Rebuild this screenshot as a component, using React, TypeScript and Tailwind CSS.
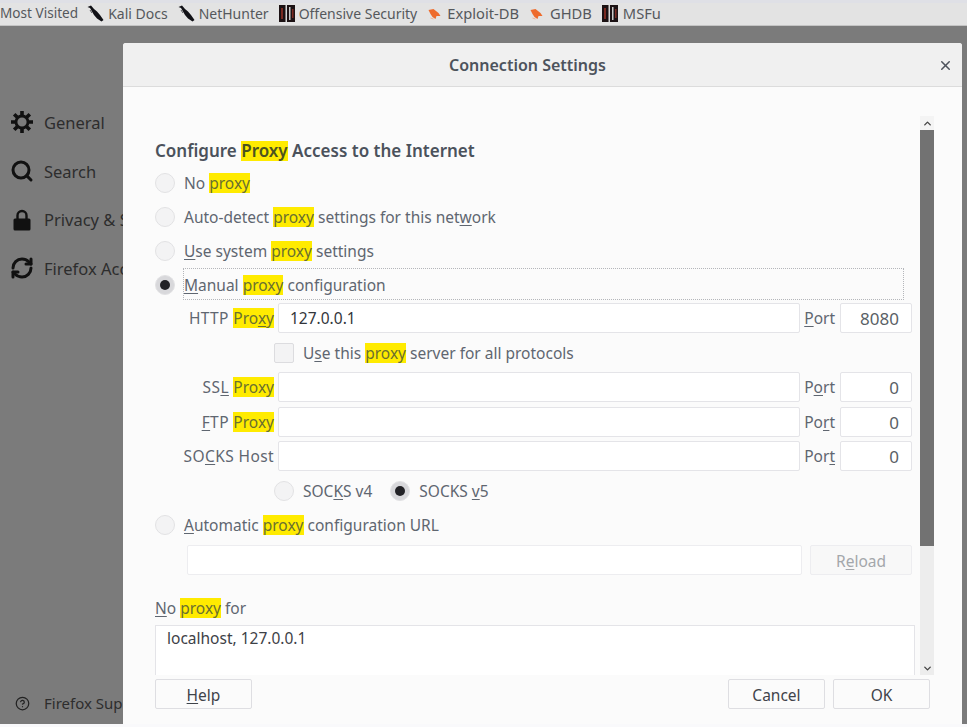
import React from 'react';
import { X, ChevronUp, ChevronDown, Search, RefreshCw, CircleHelp } from 'lucide-react';

const Hl: React.FC<{ children: React.ReactNode; strong?: boolean }> = ({ children, strong }) => (
  <span className={`inline-block h-[20px] leading-[20px] tracking-normal bg-[#ffeb00] ${strong ? 'text-[#4c5320]' : 'text-[#6a7030]'}`}>{children}</span>
);

const U: React.FC<{ children: React.ReactNode }> = ({ children }) => (
  <span className="underline underline-offset-2 decoration-1">{children}</span>
);

const Radio: React.FC<{ on?: boolean }> = ({ on }) => (
  <span className={`flex items-center justify-center w-[20px] h-[20px] rounded-full border border-[#e2e2e4] shrink-0 ${on ? 'bg-[#d8d8db]' : 'bg-[#f3f3f4]'}`}>
    {on && <span className="w-[10px] h-[10px] rounded-full bg-[#222226]" />}
  </span>
);

const KaliIcon = () => (
  <svg width="17" height="17" viewBox="0 0 17 17" className="shrink-0">
    <path d="M0.5 2 L4 0.5 L7 4 L10 6.5 L13 10 L16.5 15 L14.5 16.5 L10 13.5 L7 10 L5 6.5 L3 3 Z" fill="#111116" />
    <path d="M3 5 L5 8" stroke="#55555a" strokeWidth="1" />
  </svg>
);

const OffsecIcon = () => (
  <svg width="16" height="17" viewBox="0 0 16 17" className="shrink-0">
    <rect width="16" height="17" fill="#1c1214" />
    <rect x="2" y="3" width="2" height="11" fill="#7a2a22" />
    <rect x="6.5" y="0" width="1.5" height="17" fill="#d8d8d8" />
    <rect x="10" y="2" width="1.5" height="13" fill="#c9c9c9" />
    <rect x="13" y="4" width="1.5" height="9" fill="#7a2a22" />
  </svg>
);

const BugIcon = () => (
  <svg width="15" height="12" viewBox="0 0 14 12" className="shrink-0">
    <path d="M1 2 L6 1 L11 5 L13 8 L9 8 L8 11 L5 9 L3 6 Z" fill="#ee6b2c" />
    <path d="M3 10 L6 11" stroke="#f4b090" strokeWidth="1" />
  </svg>
);

const GearIcon = () => (
  <svg width="24" height="24" viewBox="0 0 24 24" className="shrink-0">
    <g stroke="#111" strokeWidth="3.6" strokeLinecap="butt">
      <path d="M12 1V6M12 18v5M1 12H6M18 12h5M4.2 4.2l3.6 3.6M16.2 16.2l3.6 3.6M4.2 19.8l3.6-3.6M16.2 7.8l3.6-3.6" />
    </g>
    <circle cx="12" cy="12" r="6" fill="none" stroke="#111" strokeWidth="2.8" />
  </svg>
);

const LockIcon = () => (
  <svg width="24" height="24" viewBox="0 0 24 24" className="shrink-0">
    <path d="M7.5 11V7.5a4.5 4.5 0 0 1 9 0V11" fill="none" stroke="#111" strokeWidth="2.4" />
    <rect x="3.5" y="10.5" width="17" height="12" rx="1.5" fill="#111" />
  </svg>
);

const Bookmark: React.FC<{ icon: React.ReactNode; label: string; className?: string }> = ({ icon, label, className }) => (
  <span className={`flex items-center gap-[4px] ${className ?? ''}`}>
    {icon}
    <span>{label}</span>
  </span>
);

const SideItem: React.FC<{ icon: React.ReactNode; label: string }> = ({ icon, label }) => (
  <div className="flex items-center h-[48.7px] gap-[10px] pl-[10px] whitespace-nowrap">
    {icon}
    <span className="pt-[2px]">{label}</span>
  </div>
);

const Field: React.FC<{ className?: string; value?: string; right?: boolean }> = ({ className, value, right }) => (
  <div className={`h-[30px] pt-[2px] bg-white border border-[#e4e4e8] rounded-[2px] flex items-center ${right ? 'justify-end pr-[12px] text-[17px] text-[#5a5f66]' : 'pl-[11px] text-[15.5px] text-[#33363b]'} ${className ?? ''}`}>
    {value}
  </div>
);

const ProxyRow: React.FC<{ label: React.ReactNode; port: React.ReactNode; value?: string; portValue: string; className?: string }> = ({ label, port, value, portValue, className }) => (
  <div className={`flex items-center h-[30px] ${className ?? ''}`}>
    <div className="w-[119px] pt-[2px] text-right tracking-[0.4px] whitespace-nowrap">{label}</div>
    <Field className="ml-[4px] w-[522px]" value={value} />
    <div className="w-[35px] pt-[2px] text-right whitespace-nowrap mr-[5px]">{port}</div>
    <Field className="w-[72px]" value={portValue} right />
  </div>
);

const RadioRow: React.FC<{ on?: boolean; children: React.ReactNode }> = ({ on, children }) => (
  <div className="flex items-center h-[34px] gap-[9px] whitespace-nowrap">
    <Radio on={on} />
    <span className="pt-[2px]">{children}</span>
  </div>
);

const Button: React.FC<{ className?: string; children: React.ReactNode }> = ({ className, children }) => (
  <div className={`flex items-center justify-center w-[97px] h-[30px] pt-[3px] bg-[#fbfbfb] border border-[#dedee2] rounded-[2px] text-[#3f434a] ${className ?? ''}`}>
    {children}
  </div>
);

export default function App() {
  return (
    <div
      className="relative w-[967px] h-[727px] overflow-hidden bg-[#7b7b7b] text-[15.5px] text-[#5f6670]"
      style={{ fontFamily: '"Noto Sans", sans-serif' }}
    >
      <div className="h-[3px] bg-[#dfe0e6]" />
      <div className="flex items-center h-[23px] pb-[1px] bg-[#e3e3e3] border-b border-[#c4c4c4] gap-[10px] text-[14px] text-[#55585c] whitespace-nowrap">
        <span className="text-[13.6px] mr-[-1px]">Most Visited</span>
        <Bookmark icon={<KaliIcon />} label="Kali Docs" />
        <Bookmark icon={<KaliIcon />} label="NetHunter" />
        <Bookmark icon={<OffsecIcon />} label="Offensive Security" />
        <Bookmark className="text-[14.7px] gap-[5px]" icon={<BugIcon />} label="Exploit-DB" />
        <Bookmark className="text-[14.7px] gap-[6px]" icon={<BugIcon />} label="GHDB" />
        <Bookmark className="text-[14.7px] gap-[5px]" icon={<OffsecIcon />} label="MSFu" />
      </div>

      {/* greyed out preferences sidebar */}
      <div className="flex flex-col pt-[72px] text-[16.5px] text-[#2d2d2d]">
        <SideItem icon={<GearIcon />} label="General" />
        <SideItem icon={<Search size={24} strokeWidth={3} color="#111" />} label="Search" />
        <SideItem icon={<LockIcon />} label="Privacy & Security" />
        <SideItem icon={<RefreshCw size={24} strokeWidth={3} color="#111" />} label="Firefox Account" />
      </div>
      <div className="absolute left-[15px] top-[692px] flex items-center gap-[14px] text-[15px] text-[#2d2d2d] whitespace-nowrap">
        <CircleHelp size={15} strokeWidth={2} color="#222" />
        <span>Firefox Support</span>
      </div>

      {/* dialog */}
      <div className="absolute left-[123px] top-[43px] w-[839px] h-[681px] bg-[#fbfbfb] rounded-t-[3px] flex flex-col">
        <div className="relative flex items-center justify-center h-[44px] shrink-0 pr-[30px] bg-[#f0f0f0] border-b border-[#dcdcdc] rounded-t-[3px] font-semibold text-[16px] text-[#4d535c]">
          Connection Settings
          <X size={15} strokeWidth={2.4} className="absolute right-[9px] top-[15px] text-[#4d535c]" />
        </div>

        <div className="flex h-[559px] mt-[29px] shrink-0">
          <div className="w-[797px] shrink-0 pl-[32px] overflow-hidden">
            <div className="pt-[20px] h-[50px] flex items-center font-semibold text-[17px] text-[#4b525c] whitespace-nowrap">
              <span>Configure <Hl strong>Proxy</Hl> Access to the Internet</span>
            </div>
            <RadioRow>No <Hl>proxy</Hl></RadioRow>
            <RadioRow>Auto-detect <Hl>proxy</Hl> settings for this net<U>w</U>ork</RadioRow>
            <RadioRow><U>U</U>se system <Hl>proxy</Hl> settings</RadioRow>
            <div className="flex items-center h-[34px] gap-[9px] whitespace-nowrap">
              <Radio on />
              <div className="w-[721px] h-[32px] mt-[-2px] pt-[3px] flex items-center border border-dotted border-[#b4b6ba] ml-[-1px]">
                <span><U>M</U>anual <Hl>proxy</Hl> configuration</span>
              </div>
            </div>
            <ProxyRow className="mt-[1px]" label={<>HTTP <Hl>Pro<U>x</U>y</Hl></>} port={<><U>P</U>ort</>} value="127.0.0.1" portValue="8080" />
            <div className="flex items-center h-[39px] pl-[119px] gap-[9px] whitespace-nowrap">
              <span className="w-[20px] h-[20px] bg-[#f3f3f4] border border-[#dcdcdf] rounded-[2px] shrink-0" />
              <span className="pt-[2px]">U<U>s</U>e this <Hl>proxy</Hl> server for all protocols</span>
            </div>
            <ProxyRow label={<>SS<U>L</U> <Hl>Proxy</Hl></>} port={<>P<U>o</U>rt</>} portValue="0" />
            <ProxyRow className="mt-[5px]" label={<><U>F</U>TP <Hl>Proxy</Hl></>} port={<>Po<U>r</U>t</>} portValue="0" />
            <ProxyRow className="mt-[4px]" label={<>SO<U>C</U>KS Host</>} port={<>Por<U>t</U></>} portValue="0" />
            <div className="flex items-center h-[39px] pl-[119px] whitespace-nowrap">
              <Radio />
              <span className="ml-[9px] pt-[2px]">SOC<U>K</U>S v4</span>
              <span className="ml-[18px]"><Radio on /></span>
              <span className="ml-[9px] pt-[2px]">SOCKS <U>v</U>5</span>
            </div>
            <div className="mt-[-2px]">
              <RadioRow><U>A</U>utomatic <Hl>proxy</Hl> configuration URL</RadioRow>
            </div>
            <div className="flex items-center h-[30px] mt-[3px] pl-[32px]">
              <div className="w-[615px] h-[30px] bg-white border border-[#ededf0] rounded-[2px]" />
              <div className="ml-[8px] w-[102px] h-[30px] pt-[3px] flex items-center justify-center bg-[#f8f8f8] border border-[#ededf0] rounded-[2px] text-[#a4a7ab]">
                <span>R<U>e</U>load</span>
              </div>
            </div>
            <div className="mt-[22px] h-[28px] whitespace-nowrap">
              <U>N</U>o <Hl>proxy</Hl> for
            </div>
            <div className="w-[760px] h-[60px] bg-white border border-b-0 border-[#e4e4e8] pl-[11px] pt-[1px] text-[#3d4147] whitespace-nowrap">
              localhost, 127.0.0.1
            </div>
          </div>
          <div className="w-[14px] flex flex-col bg-[#ededed]">
            <div className="h-[14px] bg-[#f4f4f4] flex items-center justify-center">
              <ChevronUp size={11} strokeWidth={3} className="text-[#444]" />
            </div>
            <div className="h-[416px] bg-[#727272]" />
            <div className="flex-1" />
            <div className="h-[14px] flex items-center justify-center">
              <ChevronDown size={11} strokeWidth={3} className="text-[#444]" />
            </div>
          </div>
        </div>

        <div className="flex items-center h-[30px] mt-[4px] pl-[32px] pr-[32px] gap-[8px]">
          <Button><span><U>H</U>elp</span></Button>
          <div className="flex-1" />
          <Button>Cancel</Button>
          <Button>OK</Button>
        </div>
      </div>
      <div className="absolute left-0 right-0 bottom-0 h-[3px] bg-[#f9f9fb]" />
    </div>
  );
}
